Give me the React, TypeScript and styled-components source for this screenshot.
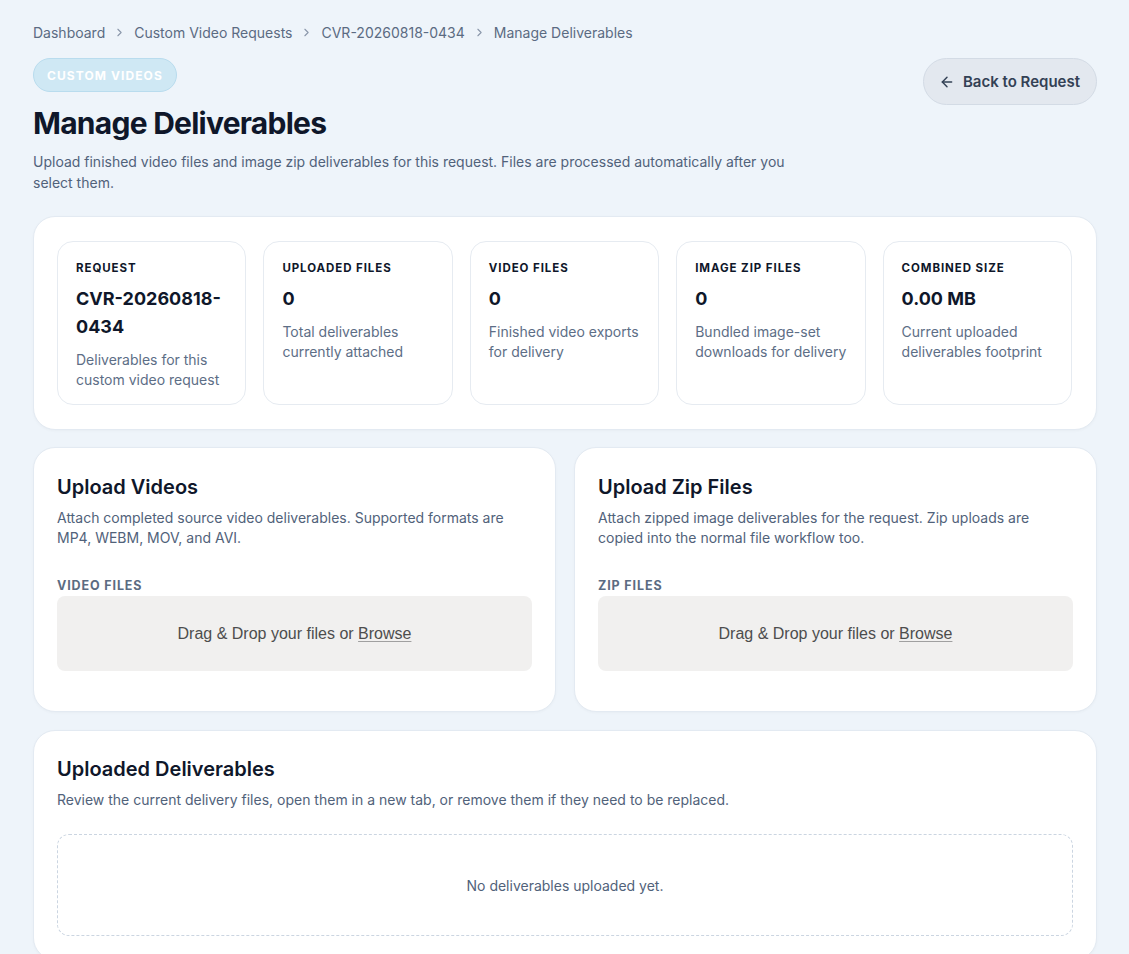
import React from "react";
import styled, { createGlobalStyle } from "styled-components";

const Global = createGlobalStyle`
  * { box-sizing: border-box; }
  body {
    margin: 0;
    background: #eef4fa;
    font-family: Inter, "Noto Sans", sans-serif;
    color: #0f172a;
  }
`;

const Page = styled.div`
  padding: 20px 32px 40px 33px;
  display: flex;
  flex-direction: column;
`;

const Breadcrumbs = styled.nav`
  display: flex;
  align-items: center;
  gap: 8px;
  font-size: 14px;
  color: #5b6b82;
  height: 24px;
`;

const Crumb = styled.span``;

const Sep = styled.svg`
  width: 13px;
  height: 13px;
  color: #8a97aa;
`;

const Header = styled.header`
  display: flex;
  justify-content: space-between;
  align-items: flex-start;
  margin-top: 14px;
`;

const HeaderMain = styled.div`
  display: flex;
  flex-direction: column;
  align-items: flex-start;
`;

const Badge = styled.span`
  display: inline-flex;
  align-items: center;
  height: 34px;
  padding: 0 13px;
  border-radius: 999px;
  background: #cfe8f4;
  border: 1px solid #b9dcee;
  color: #ffffff;
  font-size: 12px;
  font-weight: 700;
  letter-spacing: 0.09em;
`;

const Title = styled.h1`
  margin: 13px 0 0;
  font-size: 30px;
  line-height: 36px;
  font-weight: 700;
  letter-spacing: -0.025em;
  color: #0f172a;
`;

const Lead = styled.p`
  margin: 10px 0 0;
  max-width: 770px;
  font-size: 14px;
  line-height: 21px;
  color: #51627a;
`;

const BackButton = styled.button`
  display: inline-flex;
  align-items: center;
  gap: 8px;
  height: 47px;
  padding: 0 16px 0 15px;
  border-radius: 999px;
  background: #e3e8ef;
  border: 1px solid #d3dbe5;
  color: #334155;
  font-family: Inter, sans-serif;
  font-size: 15px;
  font-weight: 600;
  cursor: pointer;
`;

const Card = styled.section`
  background: #ffffff;
  border: 1px solid #e3eaf2;
  border-radius: 22px;
  padding: 25px 23px 23px;
  box-shadow: 0 1px 3px rgba(15, 23, 42, 0.03);
`;

const StatsCard = styled(Card)`
  margin-top: 23px;
  padding: 24px 24px 24px 23px;
  display: grid;
  grid-template-columns: repeat(5, 1fr);
  gap: 17px;
`;

const Stat = styled.div`
  border: 1px solid #e6ebf1;
  border-radius: 16px;
  padding: 16px 18px 14px;
  min-height: 163px;
`;

const StatLabel = styled.div`
  font-size: 11.5px;
  font-weight: 700;
  letter-spacing: 0.08em;
  text-transform: uppercase;
  color: #0f172a;
  line-height: 20px;
`;

const StatValue = styled.div`
  margin-top: 7px;
  font-size: 18px;
  font-weight: 700;
  line-height: 28px;
  color: #0f172a;
`;

const StatNote = styled.div`
  margin-top: 9px;
  font-size: 14px;
  line-height: 20px;
  color: #5d6e86;
`;

const UploadRow = styled.div`
  margin-top: 17px;
  display: grid;
  grid-template-columns: 1fr 1fr;
  gap: 18px;
`;

const CardTitle = styled.h2`
  margin: 0;
  font-size: 20px;
  line-height: 28px;
  font-weight: 600;
  color: #0f172a;
`;

const CardText = styled.p`
  margin: 7px 0 0;
  font-size: 14px;
  line-height: 20px;
  color: #51627a;
`;

const FieldLabel = styled.div`
  margin-top: 30px;
  font-size: 12.5px;
  font-weight: 700;
  letter-spacing: 0.07em;
  text-transform: uppercase;
  color: #5b6b82;
  line-height: 16px;
`;

const DropZone = styled.div`
  margin-top: 2px;
  height: 75px;
  border-radius: 8px;
  background: #f1f0ef;
  display: flex;
  align-items: center;
  justify-content: center;
  font-family: "Liberation Sans", Arial, sans-serif;
  font-size: 16px;
  color: #4d4d4d;
  margin-bottom: 17px;
`;

const Browse = styled.span`
  text-decoration: underline;
  text-underline-offset: 2px;
  text-decoration-color: #a0a0a0;
`;

const ListCard = styled(Card)`
  margin-top: 18px;
  padding-top: 24px;
`;

const Empty = styled.div`
  margin-top: 24px;
  height: 102px;
  border: 1px dashed #cbd5e1;
  border-radius: 12px;
  display: flex;
  align-items: center;
  justify-content: center;
  font-size: 14px;
  color: #51627a;
`;

const Chevron = () => (
  <Sep viewBox="0 0 24 24" fill="none" stroke="currentColor" strokeWidth="2" strokeLinecap="round" strokeLinejoin="round">
    <path d="M9 18l6-6-6-6" />
  </Sep>
);

const stats = [
  { label: "Request", value: "CVR-20260818-0434", note: "Deliverables for this custom video request" },
  { label: "Uploaded Files", value: "0", note: "Total deliverables currently attached" },
  { label: "Video Files", value: "0", note: "Finished video exports for delivery" },
  { label: "Image Zip Files", value: "0", note: "Bundled image-set downloads for delivery" },
  { label: "Combined Size", value: "0.00 MB", note: "Current uploaded deliverables footprint" },
];

const uploads = [
  {
    title: "Upload Videos",
    text: "Attach completed source video deliverables. Supported formats are MP4, WEBM, MOV, and AVI.",
    label: "Video Files",
  },
  {
    title: "Upload Zip Files",
    text: "Attach zipped image deliverables for the request. Zip uploads are copied into the normal file workflow too.",
    label: "Zip Files",
  },
];

export default function App() {
  return (
    <>
      <Global />
      <Page>
        <Breadcrumbs>
          <Crumb>Dashboard</Crumb>
          <Chevron />
          <Crumb>Custom Video Requests</Crumb>
          <Chevron />
          <Crumb>CVR-20260818-0434</Crumb>
          <Chevron />
          <Crumb>Manage Deliverables</Crumb>
        </Breadcrumbs>
        <Header>
          <HeaderMain>
            <Badge>CUSTOM VIDEOS</Badge>
            <Title>Manage Deliverables</Title>
            <Lead>
              Upload finished video files and image zip deliverables for this request. Files are processed automatically after you select them.
            </Lead>
          </HeaderMain>
          <BackButton>
            <svg width="16" height="16" viewBox="0 0 24 24" fill="none" stroke="currentColor" strokeWidth="2.2" strokeLinecap="round" strokeLinejoin="round">
              <path d="M19 12H5" />
              <path d="M12 19l-7-7 7-7" />
            </svg>
            Back to Request
          </BackButton>
        </Header>

        <StatsCard>
          {stats.map((s) => (
            <Stat key={s.label}>
              <StatLabel>{s.label}</StatLabel>
              <StatValue>{s.value}</StatValue>
              <StatNote>{s.note}</StatNote>
            </Stat>
          ))}
        </StatsCard>

        <UploadRow>
          {uploads.map((u) => (
            <Card key={u.title}>
              <CardTitle>{u.title}</CardTitle>
              <CardText>{u.text}</CardText>
              <FieldLabel>{u.label}</FieldLabel>
              <DropZone>
                Drag &amp; Drop your files or&nbsp;<Browse>Browse</Browse>
              </DropZone>
            </Card>
          ))}
        </UploadRow>

        <ListCard>
          <CardTitle>Uploaded Deliverables</CardTitle>
          <CardText>
            Review the current delivery files, open them in a new tab, or remove them if they need to be replaced.
          </CardText>
          <Empty>No deliverables uploaded yet.</Empty>
        </ListCard>
      </Page>
    </>
  );
}
